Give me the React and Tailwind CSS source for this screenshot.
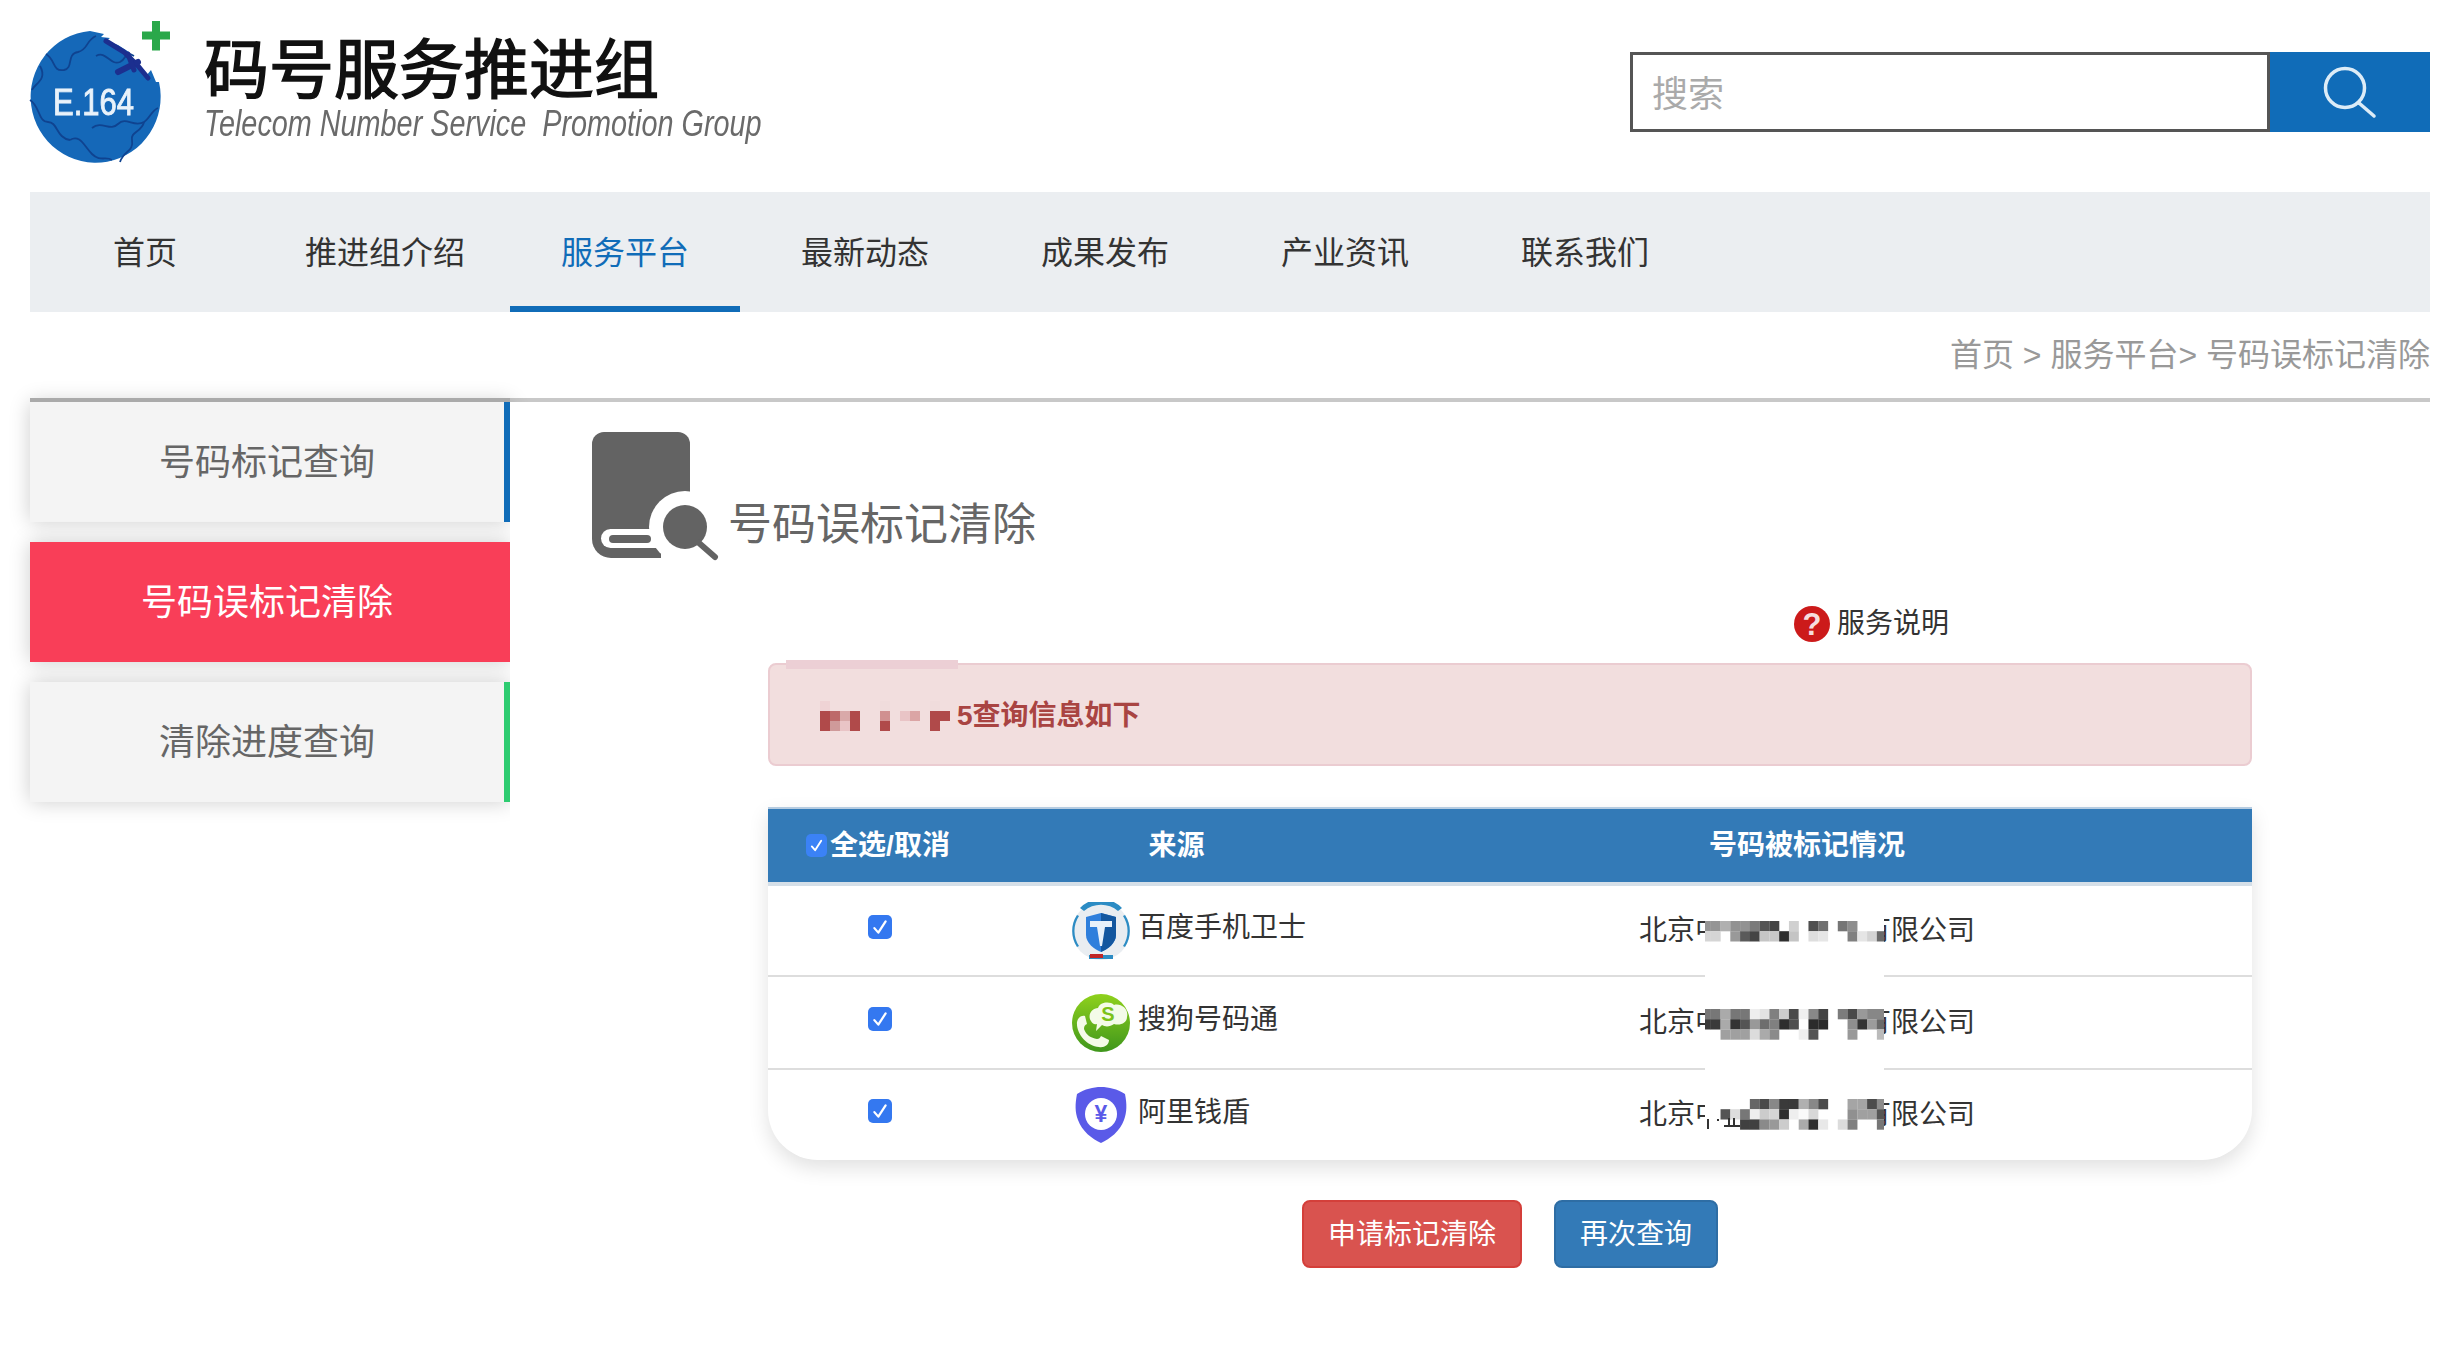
import React from "react";

const W = "";
const patches = [
  [
    ["#959595","#959595","#b0b0b0","#929292","#929292","#7a7a7a","#555555","#444444",W,"#d0d0d0",W,"#4f4f4f","#707070",W,"#767676","#8e8e8e",W,W,W],
    ["#d5d5d5","#d5d5d5",W,"#999999","#5a5a5a","#444444","#c5c5c5","#c8c8c8","#2f2f2f","#c4c4c4",W,"#dedede","#e6e6e6",W,W,"#808080","#e5e5e5","#d3d3d3","#6a6a6a"],
  ],
  [
    ["#777777","#777777","#aaaaaa","#777777","#777777","#eeeeee","#e2e2e2","#808080","#cccccc","#4a4a4a","#efefef","#888888","#444444",W,"#7c7c7c","#4a4a4a","#999999","#878787","#878787"],
    ["#3a3a3a","#3a3a3a","#aaaaaa","#333333","#555555","#999999","#6e6e6e","#808080","#2e2e2e","#4f4f4f",W,"#2b2b2b","#2b2b2b",W,W,"#8e8e8e","#333333","#9c9c9c","#6a6a6a"],
    [W,W,"#a0a0a0","#a0a0a0","#a0a0a0","#dcdcdc","#aaaaaa","#8a8a8a",W,W,"#eeeeee","#555555",W,W,W,"#999999",W,W,"#bbbbbb"],
  ],
  [
    [W,W,W,W,W,"#666666","#4a4a4a","#888888","#3a3a3a","#3a3a3a","#b0b0b0","#888888","#4c4c4c",W,W,"#a5a5a5","#a5a5a5","#4c4c4c","#8c8c8c"],
    [W,W,"#555555","#dddddd","#777777","#eeeeee","#cccccc","#d5d5d5","#2e2e2e","#eeeeee","#fafafa","#d8d8d8",W,W,W,"#909090","#a0a0a0","#a0a0a0","#555555"],
    [W,W,W,W,"#404040","#404040","#8a8a8a","#999999","#cccccc",W,"#aaaaaa","#2e2e2e","#e8e8e8",W,"#dcdcdc","#808080",W,W,"#777777"],
  ],
];

function Mosaic({ rows, top, extra }) {
  return (
    <svg width="179" height="31" viewBox="0 0 179 31" className="absolute left-0" style={{ top }}>
      {rows.map((r, y) =>
        r.map((c, x) => (c ? <rect key={x + "-" + y} x={x * 9.77 - 4} y={y * 10.2} width="9.9" height="10.3" fill={c} /> : null))
      )}
      {extra}
    </svg>
  );
}

const alertCells = [
  [0, 0, "#efd3d5"], [6, 0, "#f0dcdc"], [11, 0, "#f0dcdc"],
  [0, 1, "#b04a4a"], [1, 1, "#bd6a6a"], [2, 1, "#d9a9a9"], [3, 1, "#b04a4a"], [6, 1, "#d09090"], [8, 1, "#e9c4c6"], [9, 1, "#dba5a5"], [11, 1, "#b04a4a"], [12, 1, "#b04a4a"],
  [0, 2, "#b04a4a"], [1, 2, "#cf9a9a"], [2, 2, "#e9c4c6"], [3, 2, "#b04a4a"], [6, 2, "#b04a4a"], [11, 2, "#b04a4a"],
];

function Logo() {
  return (
    <svg width="150" height="160" viewBox="0 0 150 160" className="shrink-0 blur-[0.5px]">
      <path d="M64 21 L78 24 L75 27 L84 28 L80 31 L92 35 L103 42 L108 50 L113 58 L120 66 L125 60 L130 72 L133 72 A65 66 0 1 1 64 21 Z" fill="#1568b8" />
      <g fill="none" stroke="#0f4390" strokeWidth="1.8">
        <path d="M20 44 C30 50 26 62 38 60 C48 58 40 44 52 42 C62 40 60 30 70 26" />
        <path d="M70 46 C80 40 84 56 94 52 C102 48 98 40 108 46" />
        <path d="M4 90 C14 96 12 112 22 112 C32 112 30 128 44 130" />
        <path d="M44 130 C54 124 58 136 66 144 C74 152 80 146 86 150" />
        <path d="M66 118 C76 110 84 122 92 114 C100 106 108 118 118 112 C124 108 126 100 132 98" />
        <path d="M94 152 C98 140 108 142 106 130 C104 122 116 122 118 112" />
        <path d="M14 56 C22 70 8 74 6 80" />
      </g>
      <g stroke="#1c2f8f" fill="none" strokeLinecap="round">
        <path d="M80 31 L98 42 L112 56 L122 68" strokeWidth="5" />
        <path d="M92 62 L112 52" strokeWidth="6" />
        <path d="M102 44 L108 60" strokeWidth="5" />
      </g>
      <text x="27" y="105" fontSize="36" fill="#e9f2fa" stroke="#e9f2fa" strokeWidth="0.9" textLength="81" lengthAdjust="spacingAndGlyphs" fontFamily="Liberation Sans, sans-serif">E.164</text>
      <path d="M126 11h8v10.500h10v8h-10v11h-8v-11h-10v-8h10z" fill="#2aa84a" />
    </svg>
  );
}

function BookIcon() {
  return (
    <svg width="140" height="140" viewBox="0 0 140 140" className="shrink-0 blur-[0.4px]">
      <path d="M19 7 H93 A12 12 0 0 1 105 19 V133 H26 A19 19 0 0 1 7 114 V19 A12 12 0 0 1 19 7 Z" fill="#636363" />
      <circle cx="100" cy="102" r="36" fill="#ffffff" />
      <rect x="76" y="102" width="64" height="38" fill="#ffffff" />
      <rect x="106" y="60" width="34" height="40" fill="#ffffff" />
      <rect x="16" y="104" width="70" height="19" rx="9.500" fill="#ffffff" />
      <rect x="24" y="110" width="42" height="8" rx="4" fill="#636363" />
      <circle cx="100" cy="102" r="22" fill="#636363" />
      <path d="M114 118 L130 132" stroke="#636363" strokeWidth="6" strokeLinecap="round" />
    </svg>
  );
}

function BaiduIcon() {
  return (
    <svg width="58" height="58" viewBox="0 0 58 58" className="shrink-0">
      <circle cx="29" cy="29" r="29" fill="#e9edf1" />
      <path d="M8 6 A29 29 0 0 1 50 6 L46 9 A26 26 0 0 0 12 9 Z" fill="#2c8cc4" />
      <path d="M5 13 A29 29 0 0 0 5 45 L7 44 A27 27 0 0 1 7 14 Z" fill="#2c8cc4" />
      <path d="M53 13 A29 29 0 0 1 53 45 L51 44 A27 27 0 0 0 51 14 Z" fill="#2c8cc4" />
      <path d="M29 11 L44 15 V33 C44 41 36 47 29 50 C22 47 14 41 14 33 V15 Z" fill="#2f7fdc" />
      <path d="M29 11 L44 15 V33 C44 41 36 47 29 50 Z" fill="#14579f" />
      <path d="M18 19 H40 V25 H33 L30 44 H28 L25 25 H18 Z" fill="#e8f1fa" />
      <path d="M17 53 H41 V57 H17 Z" fill="#2c8cc4" />
      <path d="M18 52 H31 V56 H18 Z" fill="#c02626" />
    </svg>
  );
}

function SogouIcon() {
  return (
    <svg width="58" height="58" viewBox="0 0 58 58" className="shrink-0">
      <defs>
        <linearGradient id="sg" x1="0" y1="0" x2="0" y2="1">
          <stop offset="0" stopColor="#8fd11c" />
          <stop offset="1" stopColor="#3f961c" />
        </linearGradient>
      </defs>
      <circle cx="29" cy="29" r="29" fill="url(#sg)" />
      <path d="M19 27 C15 21 20 14 26 14 C28 8 38 7 42 11 C49 9 57 15 55 23 C55 29 48 32 42 30 C38 33 33 33 30 31 L24 37 L25 30 C22 31 20 29 19 27 Z" fill="#f4fbe8" />
      <text x="36" y="27" textAnchor="middle" fontSize="20" fontWeight="700" fill="#7cc21a" fontFamily="Liberation Sans, sans-serif">S</text>
      <path d="M5 28 C6 23 10 21 13 22 L15 30 C13 31 12 32 12 35 C14 41 19 44 25 45 C27 45 28 44 29 42 L37 46 C37 51 32 54 27 53 C15 52 4 40 5 28 Z" fill="#f4fbe8" />
    </svg>
  );
}

function AliIcon() {
  return (
    <svg width="58" height="58" viewBox="0 0 58 58" className="shrink-0">
      <path d="M29 1 C37 1 45 3 53 8 C55 18 55 26 52 34 C48 45 38 53 29 57 C20 53 10 45 6 34 C3 26 3 18 5 8 C13 3 21 1 29 1 Z" fill="#5a5ae8" />
      <circle cx="29" cy="28" r="16" fill="#ffffff" />
      <text x="29" y="36" textAnchor="middle" fontSize="23" fontWeight="700" fill="#5a5ae8" fontFamily="Liberation Sans, sans-serif">¥</text>
    </svg>
  );
}

function CheckBox({ small }) {
  return (
    <span className={small ? "flex h-[23px] w-[21px] items-center justify-center rounded-[5px] bg-[#3b82f6]" : "flex h-[24px] w-[24px] items-center justify-center rounded-[5px] bg-[#3478f0]"}>
      <svg width={small ? 15 : 18} height={small ? 15 : 18} viewBox="0 0 16 16" fill="none" stroke="#ffffff" strokeWidth="2" strokeLinecap="round" strokeLinejoin="round">
        <path d="M3 9 L6.500 13 L13 3" />
      </svg>
    </span>
  );
}

const nav = ["首页", "推进组介绍", "服务平台", "最新动态", "成果发布", "产业资讯", "联系我们"];

const rows = [
  { h: "h-[91px]", icon: <BaiduIcon />, name: "百度手机卫士" },
  { h: "h-[93px]", icon: <SogouIcon />, name: "搜狗号码通" },
  { h: "h-[90px]", icon: <AliIcon />, name: "阿里钱盾" },
];

export default function App() {
  return (
    <div className="h-[1348px] w-[2462px] overflow-hidden bg-white font-[Liberation_Sans,Noto_Sans_CJK_SC,sans-serif]">
      <div className="ml-[30px] w-[2400px]">
        {/* header */}
        <header className="flex h-[192px] items-start justify-between">
          <div className="-ml-[4px] flex pt-[10px]">
            <Logo />
            <div className="ml-[28px] flex flex-col">
              <div className="mt-[21px] text-[65px] leading-[80px] text-[#111111] blur-[0.4px] [-webkit-text-stroke:1.5px_#111111]">码号服务推进组</div>
              <div className="-mt-[7px] origin-left scale-x-[0.8] whitespace-pre text-[36px] italic leading-[40px] text-[#6a6a6a] blur-[0.4px]">Telecom Number Service  Promotion Group</div>
            </div>
          </div>
          <div className="mt-[52px] flex h-[80px]">
            <div className="flex w-[640px] items-center border-[3px] border-[#555555] bg-white pl-[19px] pt-[5px] text-[36px] text-[#aaaaaa]">搜索</div>
            <div className="flex w-[160px] items-center justify-center bg-[#106cb8]">
              <svg width="60" height="60" viewBox="0 0 60 60" fill="none" stroke="#dcecf7" strokeWidth="3.500" strokeLinecap="round">
                <ellipse cx="25" cy="26" rx="19.500" ry="19.500" />
                <path d="M39 41 L54 54" />
              </svg>
            </div>
          </div>
        </header>

        {/* nav */}
        <nav className="flex h-[120px] gap-[10px] bg-[#ebeef1]">
          {nav.map((n, i) => (
            <div
              key={n}
              className={
                i === 2
                  ? "flex h-full w-[230px] items-center justify-center pt-[2px] text-[32px] text-[#106cb8] shadow-[inset_0_-6px_0_#106cb8]"
                  : "flex h-full w-[230px] items-center justify-center pt-[2px] text-[32px] text-[#333333]"
              }
            >
              {n}
            </div>
          ))}
        </nav>

        {/* breadcrumb */}
        <div className="flex h-[90px] items-center justify-end border-b-4 border-[#c8c8c8] text-[32px] text-[#999999]">
          首页 &gt; 服务平台&gt; 号码误标记清除
        </div>

        {/* body */}
        <div className="flex">
          <aside className="relative -mt-[4px] flex h-[404px] w-[480px] shrink-0 flex-col gap-[20px] pt-[4px]">
            <div className="absolute left-0 top-0 h-[4px] w-full bg-[#aaaaaa]" />
            <div className="flex h-[120px] items-center justify-center border-r-[6px] border-[#106cb8] bg-[#f4f4f4] pt-[2px] text-[36px] text-[#666666] shadow-[0_0_20px_rgba(0,0,0,0.2)]">号码标记查询</div>
            <div className="flex h-[120px] items-center justify-center border-r-[6px] border-[#f93e58] bg-[#f93e58] pt-[2px] text-[36px] text-white shadow-[0_0_20px_rgba(0,0,0,0.2)]">号码误标记清除</div>
            <div className="flex h-[120px] items-center justify-center border-r-[6px] border-[#2ecc71] bg-[#f4f4f4] pt-[2px] text-[36px] text-[#666666] shadow-[0_0_20px_rgba(0,0,0,0.2)]">清除进度查询</div>
          </aside>

          <main className="relative z-10 min-w-0 flex-1 bg-white pl-[75px] pt-[23px]">
            <div className="flex h-[140px] items-start">
              <BookIcon />
              <div className="ml-[3px] mt-[72px] text-[44px] leading-[56px] text-[#666666]">号码误标记清除</div>
            </div>

            <div className="ml-[1209px] mt-[41px] flex h-[36px] items-center">
              <svg width="36" height="36" viewBox="0 0 36 36" className="shrink-0">
                <circle cx="18" cy="18" r="18" fill="#cc1a1a" />
                <text x="18" y="29" textAnchor="middle" fontSize="31" fontWeight="700" fill="#f6dede" fontFamily="Liberation Sans, sans-serif">?</text>
              </svg>
              <span className="ml-[7px] text-[28px] text-[#333333]">服务说明</span>
            </div>

            <div className="relative ml-[183px] mt-[21px] flex h-[103px] w-[1484px] items-center rounded-[8px] border-2 border-[#ebccd1] bg-[#f2dede] pl-[50px] pt-[2px] text-[28px] font-bold text-[#a94442]">
              <div className="absolute -top-[5px] left-[16px] h-[9px] w-[172px] bg-[#eccfd5]" />
              <svg width="137" height="30" viewBox="0 0 137 30" className="shrink-0">
                {alertCells.map(([x, y, c]) => (
                  <rect key={x + "-" + y} x={x * 10} y={y * 10} width="10" height="10" fill={c} />
                ))}
              </svg>
              <span>5查询信息如下</span>
            </div>

            <div className="ml-[183px] mt-[41px] w-[1484px] rounded-b-[50px] bg-white shadow-[0_8px_20px_rgba(0,0,0,0.12)]">
              <div className="grid h-[79px] grid-cols-[594px_1fr] border-y-[2px] border-b-[4px] border-t-[#b5cbe0] border-b-[#d5dfe8] bg-[#337ab7] text-[28px] font-bold text-white">
                <div className="grid grid-cols-[223px_371px]">
                  <div className="flex items-center justify-center pr-[3px]">
                    <CheckBox small />
                    <span className="ml-[3px]">全选/取消</span>
                  </div>
                  <div className="flex items-center justify-center">来源</div>
                </div>
                <div className="flex items-center justify-center">号码被标记情况</div>
              </div>

              {rows.map((r, idx) => (
                <div key={r.name} className={"grid grid-cols-[223px_371px_1fr] " + r.h + (idx < 2 ? " border-b-2 border-[#dddddd]" : "")}>
                  <div className="flex items-center justify-center pb-[8px]">
                    <CheckBox />
                  </div>
                  <div className="flex items-center pl-[81px]">
                    {r.icon}
                    <span className="mb-[5px] ml-[8px] text-[28px] text-[#333333]">{r.name}</span>
                  </div>
                  <div className="relative flex items-center justify-center text-[28px] text-[#333333]">
                    <span>北京中</span>
                    <span className="w-[140px]" />
                    <span>有限公司</span>
                    <div className={idx === 1 ? "absolute -bottom-[2px] -top-[2px] left-[343px] z-10 w-[179px] bg-white" : "absolute bottom-0 left-[343px] top-0 z-10 w-[179px] bg-white"}>
                      <Mosaic
                        rows={patches[idx]}
                        top={idx === 0 ? 35 : idx === 1 ? 34 : 29}
                        extra={
                          idx === 2 ? (
                            <g fill="#333333">
                              <rect x="2" y="20" width="2" height="10" />
                              <rect x="12" y="20" width="2" height="2" />
                              <rect x="23" y="19" width="2" height="8" />
                              <rect x="28" y="19" width="2" height="8" />
                              <rect x="19" y="26" width="16" height="2" />
                            </g>
                          ) : null
                        }
                      />
                    </div>
                  </div>
                </div>
              ))}
            </div>

            <div className="ml-[717px] mt-[40px] flex gap-[32px]">
              <button className="h-[68px] w-[220px] rounded-[8px] border-2 border-[#d43f3a] bg-[#d9534f] pt-[1px] text-[28px] text-white">申请标记清除</button>
              <button className="h-[68px] w-[164px] rounded-[8px] border-2 border-[#2e6da4] bg-[#337ab7] pt-[1px] text-[28px] text-white">再次查询</button>
            </div>
          </main>
        </div>
      </div>
    </div>
  );
}
